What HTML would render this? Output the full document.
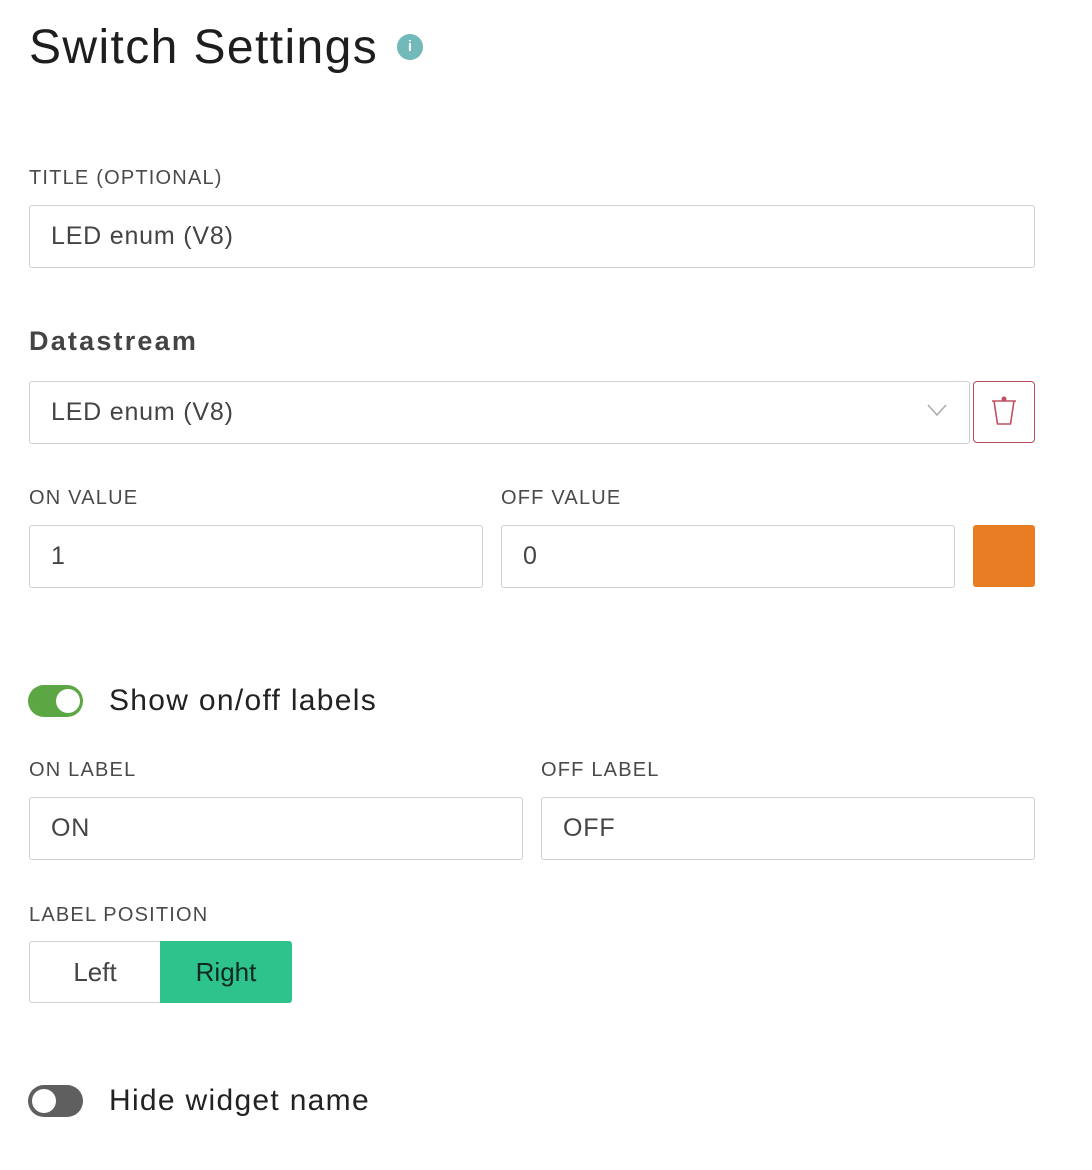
<!DOCTYPE html>
<html><head><style>
*{margin:0;padding:0;box-sizing:border-box}
body{width:1092px;height:1170px;background:#fff;font-family:"Liberation Sans",sans-serif;position:relative;overflow:hidden}
.a{position:absolute}
.lbl{position:absolute;font-size:20px;color:#4a4a4a;letter-spacing:1.2px;line-height:20px}
.inp{position:absolute;border:1px solid #cfcfcf;border-radius:3px;font-size:25px;color:#444;padding-left:21px;display:flex;align-items:center;letter-spacing:0.8px}
.tg{position:absolute;width:55px;height:32px;border-radius:16px}
.kn{position:absolute;top:4px;width:24px;height:24px;border-radius:50%;background:#fff}
.tt{position:absolute;font-size:30px;color:#222;line-height:32px;letter-spacing:1.3px}
</style></head><body>
<div class="a" style="left:29px;top:20px;font-size:48px;color:#1e1e1e;line-height:56px;letter-spacing:1.4px">Switch Settings</div>
<div class="a" style="left:397px;top:34px;width:26px;height:26px;border-radius:50%;background:#72b9b9;color:#fff;font-size:15px;text-align:center;line-height:26px;font-weight:bold">i</div>

<div class="lbl" style="left:29px;top:168px">TITLE (OPTIONAL)</div>
<div class="inp" style="left:29px;top:205px;width:1006px;height:63px">LED enum (V8)</div>

<div class="a" style="left:29px;top:326px;font-size:27px;font-weight:bold;color:#444;letter-spacing:2.2px">Datastream</div>
<div class="inp" style="left:29px;top:381px;width:941px;height:63px">LED enum (V8)</div>
<svg class="a" style="left:926px;top:402px" width="22" height="16"><path d="M2 3 L11 13 L20 3" fill="none" stroke="#aaa" stroke-width="1.5"/></svg>
<div class="a" style="left:973px;top:381px;width:62px;height:62px;border:1.5px solid #b84a5a;border-radius:4px"></div>
<svg class="a" style="left:988px;top:394px" width="32" height="36"><circle cx="16" cy="5" r="2.5" fill="#c05060"/><path d="M4 7 H28 M6 7 L9.5 30 H22.5 L26 7" fill="none" stroke="#c05060" stroke-width="1.6"/></svg>

<div class="lbl" style="left:29px;top:488px">ON VALUE</div>
<div class="lbl" style="left:501px;top:488px">OFF VALUE</div>
<div class="inp" style="left:29px;top:525px;width:454px;height:63px">1</div>
<div class="inp" style="left:501px;top:525px;width:454px;height:63px">0</div>
<div class="a" style="left:973px;top:525px;width:62px;height:62px;background:#e97d23;border-radius:3px"></div>

<div class="tg" style="left:28px;top:685px;background:#5ca643"><div class="kn" style="left:28px"></div></div>
<div class="tt" style="left:109px;top:685px">Show on/off labels</div>

<div class="lbl" style="left:29px;top:760px">ON LABEL</div>
<div class="lbl" style="left:541px;top:760px">OFF LABEL</div>
<div class="inp" style="left:29px;top:797px;width:494px;height:63px">ON</div>
<div class="inp" style="left:541px;top:797px;width:494px;height:63px">OFF</div>

<div class="lbl" style="left:29px;top:905px">LABEL POSITION</div>
<div class="a" style="left:29px;top:941px;width:131px;height:62px;border:1px solid #d0d0d0;border-right:none;border-radius:3px 0 0 3px;font-size:26px;color:#444;text-align:center;line-height:60px">Left</div>
<div class="a" style="left:160px;top:941px;width:132px;height:62px;background:#2ec28c;border-radius:0 3px 3px 0;font-size:26px;color:#0f2a1e;text-align:center;line-height:62px">Right</div>

<div class="tg" style="left:28px;top:1085px;background:#5f5f5f"><div class="kn" style="left:4px"></div></div>
<div class="tt" style="left:109px;top:1085px">Hide widget name</div>
</body></html>
